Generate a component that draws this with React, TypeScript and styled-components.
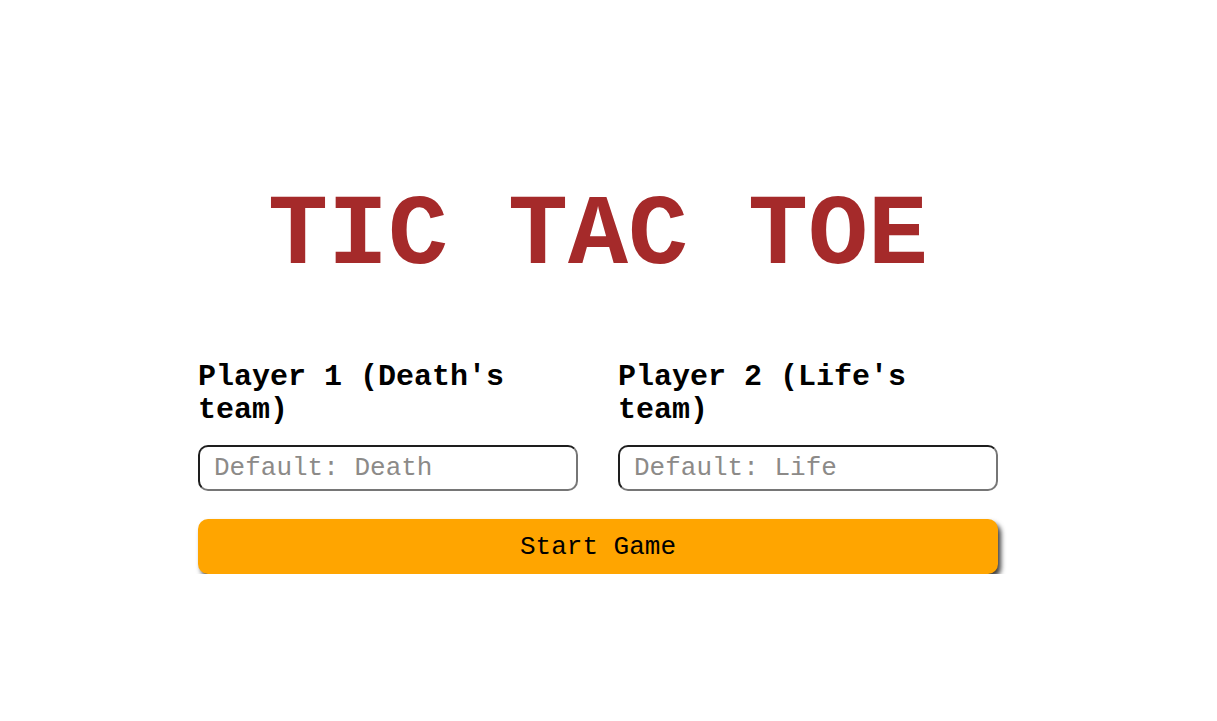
import React from 'react';
import styled, { createGlobalStyle } from 'styled-components';

const mono = `"Courier New", "Nimbus Mono PS", "FreeMono", "Liberation Mono", monospace`;

const GlobalStyle = createGlobalStyle`
  html, body {
    margin: 0;
    padding: 0;
    background: #ffffff;
  }
  body {
    font-family: ${mono};
    padding-right: 21px;
  }
`;

const Page = styled.main`
  display: flex;
  flex-direction: column;
  align-items: center;
  padding-top: 180px;
`;

const Title = styled.h1`
  margin: 0 0 68px;
  font-size: 100px;
  font-weight: bold;
  color: #a52a2a;
`;

const Form = styled.form`
  width: 800px;
  display: flex;
  flex-direction: column;
  gap: 28px;
`;

const Players = styled.div`
  display: grid;
  grid-template-columns: 1fr 1fr;
  column-gap: 40px;
`;

const Field = styled.div`
  display: flex;
  flex-direction: column;
  gap: 18px;
`;

const Label = styled.label`
  font-size: 30px;
  font-weight: bold;
  line-height: 33px;
  color: #000;
`;

const NameInput = styled.input`
  box-sizing: border-box;
  width: 100%;
  height: 46px;
  padding: 0 14px;
  font-family: ${mono};
  font-size: 26px;
  color: #000;
  background: #fff;
  border: 2px solid;
  border-color: #1e1e1e #767676 #767676 #1e1e1e;
  border-radius: 10px;
  outline: none;

  &::placeholder {
    color: #8c8a88;
  }
`;

const StartButton = styled.button`
  height: 55px;
  width: 100%;
  font-family: ${mono};
  font-size: 26px;
  color: #000;
  background: #ffa500;
  border: none;
  border-radius: 10px;
  box-shadow: 3px 4px 5px rgba(0, 0, 0, 0.75);
  cursor: pointer;
`;

export default function App() {
  return (
    <>
      <GlobalStyle />
      <Page>
        <Title>TIC TAC TOE</Title>
        <Form onSubmit={(e) => e.preventDefault()}>
          <Players>
            <Field>
              <Label htmlFor="p1">Player 1 (Death's team)</Label>
              <NameInput id="p1" placeholder="Default: Death" />
            </Field>
            <Field>
              <Label htmlFor="p2">Player 2 (Life's team)</Label>
              <NameInput id="p2" placeholder="Default: Life" />
            </Field>
          </Players>
          <StartButton type="submit">Start Game</StartButton>
        </Form>
      </Page>
    </>
  );
}
